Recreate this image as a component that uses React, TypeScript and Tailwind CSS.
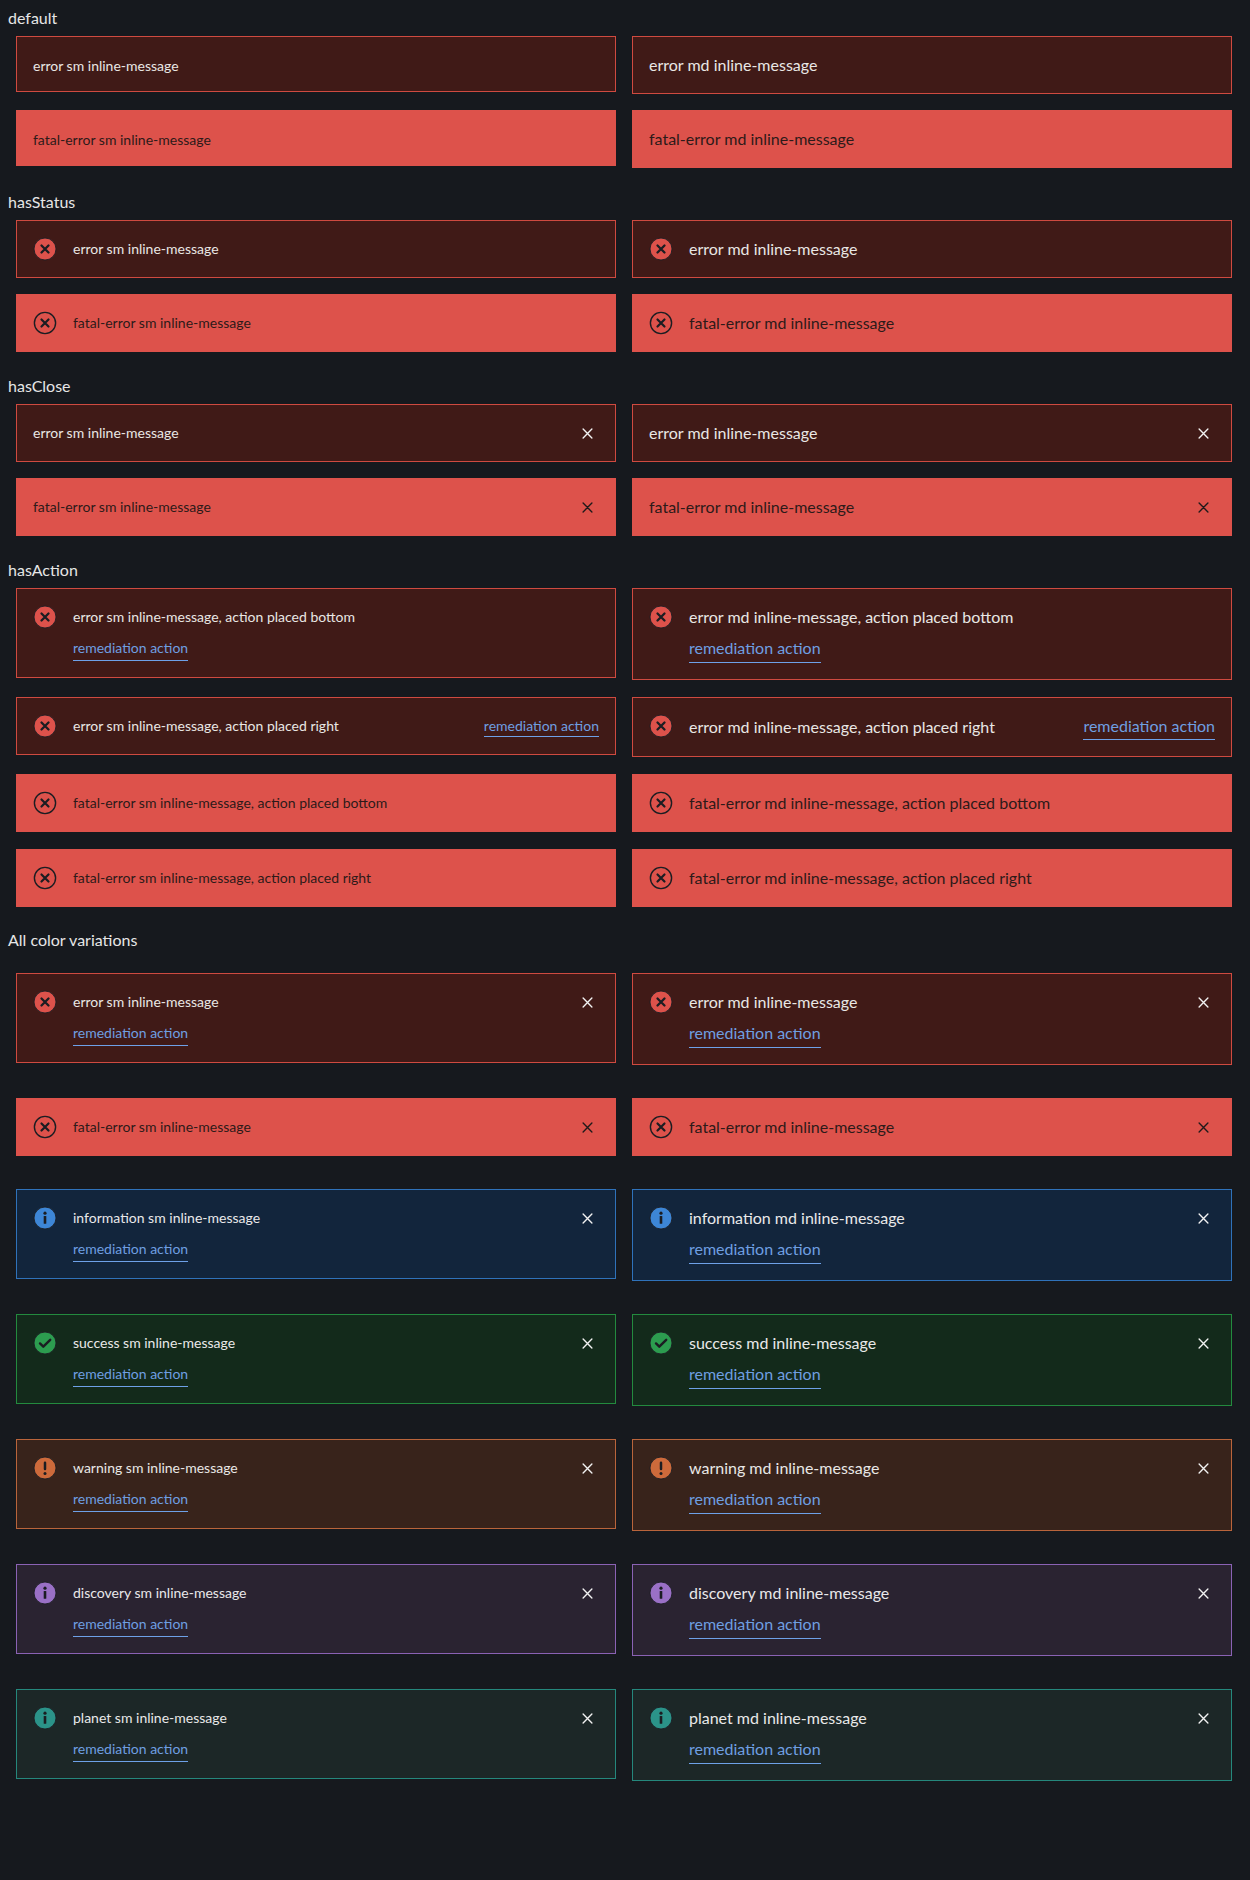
import React from "react";

type Variant = "error" | "fatal" | "information" | "success" | "warning" | "discovery" | "planet";
type Size = "sm" | "md";
type Action = "none" | "bottom" | "right";

const DARK = "#1b1d22";

const styles: Record<Variant, { box: string; text: string; icon: string; closeColor: string }> = {
  error: { box: "bg-[#401a17] border-[#cf4a40]", text: "text-[#e9e7e4]", icon: "#dd524b", closeColor: "#f2f2f2" },
  fatal: { box: "bg-[#dd524b] border-[#dd524b]", text: "text-[#2d1a19]", icon: "#dd524b", closeColor: "#1f1a1a" },
  information: { box: "bg-[#12253c] border-[#2f72ba]", text: "text-[#e9e9ea]", icon: "#3d86d6", closeColor: "#f2f2f2" },
  success: { box: "bg-[#132a1b] border-[#238a3e]", text: "text-[#e9e9e9]", icon: "#2c9c4f", closeColor: "#f2f2f2" },
  warning: { box: "bg-[#38231b] border-[#b9643b]", text: "text-[#e9e8e6]", icon: "#cd6a3b", closeColor: "#f2f2f2" },
  discovery: { box: "bg-[#2a2331] border-[#8a62b4]", text: "text-[#e9e8ea]", icon: "#9a70c6", closeColor: "#f2f2f2" },
  planet: { box: "bg-[#1c2727] border-[#25877c]", text: "text-[#e9e9e9]", icon: "#2b9389", closeColor: "#f2f2f2" },
};

function StatusIcon({ variant }: { variant: Variant }) {
  const c = styles[variant].icon;
  if (variant === "fatal") {
    return (
      <svg width="24" height="24" viewBox="0 0 24 24" className="shrink-0">
        <circle cx="12" cy="12" r="10.6" fill="none" stroke={DARK} strokeWidth="1.4" />
        <path d="M8.5 8.5l7 7M15.5 8.5l-7 7" stroke={DARK} strokeWidth="2.2" strokeLinecap="round" />
      </svg>
    );
  }
  return (
    <svg width="24" height="24" viewBox="0 0 24 24" className="shrink-0">
      <circle cx="12" cy="12" r="11" fill={c} stroke={DARK} strokeWidth="0.9" />
      {variant === "error" && (
        <path d="M8.5 8.5l7 7M15.5 8.5l-7 7" stroke={DARK} strokeWidth="2.3" strokeLinecap="round" />
      )}
      {variant === "success" && (
        <path d="M7 12.4l3.3 3.3L17.2 8.8" fill="none" stroke={DARK} strokeWidth="2.4" strokeLinecap="round" strokeLinejoin="round" />
      )}
      {variant === "warning" && (
        <>
          <rect x="10.75" y="5.6" width="2.5" height="8.6" rx="1.25" fill={DARK} />
          <circle cx="12" cy="17.4" r="1.5" fill={DARK} />
        </>
      )}
      {(variant === "information" || variant === "discovery" || variant === "planet") && (
        <>
          <circle cx="12" cy="7.2" r="1.6" fill={DARK} />
          <rect x="10.7" y="10" width="2.6" height="7.8" rx="0.6" fill={DARK} />
        </>
      )}
    </svg>
  );
}

function CloseIcon({ color }: { color: string }) {
  return (
    <div className="w-6 h-6 shrink-0 flex items-center justify-center">
      <svg width="11" height="11" viewBox="0 0 12 12">
        <path d="M1.2 1.2l9.6 9.6M10.8 1.2l-9.6 9.6" stroke={color} strokeWidth="1.5" strokeLinecap="round" />
      </svg>
    </div>
  );
}

function Link({ size }: { size: Size }) {
  return size === "sm" ? (
    <span className="inline-block text-[14px] leading-[21px] pb-[2px] text-[#6f9fe1] border-b border-[#6ea1e8]">remediation action</span>
  ) : (
    <span className="inline-block text-[16px] leading-6 pb-[2px] text-[#6f9fe1] border-b border-[#6ea1e8]">remediation action</span>
  );
}

function RightLink({ size }: { size: Size }) {
  return size === "sm" ? (
    <span className="inline-block text-[14px] leading-[21px] text-[#6f9fe1] border-b border-[#6ea1e8]">remediation action</span>
  ) : (
    <span className="inline-block text-[16px] leading-6 pb-px text-[#6f9fe1] border-b border-[#6ea1e8]">remediation action</span>
  );
}

function Message({
  variant,
  size,
  text,
  status = false,
  close = false,
  action = "none",
}: {
  variant: Variant;
  size: Size;
  text: string;
  status?: boolean;
  close?: boolean;
  action?: Action;
}) {
  const s = styles[variant];
  const showAction = action !== "none" && variant !== "fatal";
  const plain = !status && !close;
  const textCls =
    size === "sm"
      ? plain
        ? "text-[14px] leading-[18px] pt-[4px]"
        : "text-[14px] leading-[22px]"
      : "text-[16px] leading-6";
  const rowMin = status || close ? "min-h-6" : "";
  return (
    <div className={`flex items-start gap-4 p-4 border ${s.box} ${s.text}`}>
      {status && <StatusIcon variant={variant} />}
      <div className="flex-1 min-w-0">
        {showAction && action === "right" ? (
          <div className={`flex items-center justify-between ${rowMin}`}>
            <span className={textCls}>{text}</span>
            <RightLink size={size} />
          </div>
        ) : (
          <>
            <div className={`flex items-center ${rowMin}`}>
              <span className={textCls}>{text}</span>
            </div>
            {showAction && action === "bottom" && (
              <div className={size === "sm" ? "mt-[6px]" : "mt-[7px]"}>
                <Link size={size} />
              </div>
            )}
          </>
        )}
      </div>
      {close && <CloseIcon color={s.closeColor} />}
    </div>
  );
}

function Section({
  title,
  children,
  kind = "base",
}: {
  title: string;
  children: React.ReactNode;
  kind?: "base" | "action" | "colors";
}) {
  const gridCls =
    kind === "colors"
      ? "mt-[21px] gap-y-[33px]"
      : kind === "action"
      ? "mt-[6px] gap-y-[17px]"
      : "mt-[6px] gap-y-4";
  return (
    <section className={kind === "colors" ? "" : kind === "action" ? "mb-[21px]" : "mb-[22px]"}>
      <h2 className="text-[16px] leading-6 text-[#e6e6e6] font-normal">{title}</h2>
      <div className={`ml-2 w-[1216px] grid grid-cols-2 gap-x-4 items-start ${gridCls}`}>{children}</div>
    </section>
  );
}

export default function App() {
  const colorVariants: { v: Variant; label: string }[] = [
    { v: "error", label: "error" },
    { v: "fatal", label: "fatal-error" },
    { v: "information", label: "information" },
    { v: "success", label: "success" },
    { v: "warning", label: "warning" },
    { v: "discovery", label: "discovery" },
    { v: "planet", label: "planet" },
  ];
  return (
    <div
      className="min-h-[1880px] bg-[#16191e] px-2 pt-[6px]"
      style={{ fontFamily: "Lato, 'Noto Sans', 'Liberation Sans', sans-serif" }}
    >
      <Section title="default">
        <Message variant="error" size="sm" text="error sm inline-message" />
        <Message variant="error" size="md" text="error md inline-message" />
        <Message variant="fatal" size="sm" text="fatal-error sm inline-message" />
        <Message variant="fatal" size="md" text="fatal-error md inline-message" />
      </Section>
      <Section title="hasStatus">
        <Message variant="error" size="sm" status text="error sm inline-message" />
        <Message variant="error" size="md" status text="error md inline-message" />
        <Message variant="fatal" size="sm" status text="fatal-error sm inline-message" />
        <Message variant="fatal" size="md" status text="fatal-error md inline-message" />
      </Section>
      <Section title="hasClose">
        <Message variant="error" size="sm" close text="error sm inline-message" />
        <Message variant="error" size="md" close text="error md inline-message" />
        <Message variant="fatal" size="sm" close text="fatal-error sm inline-message" />
        <Message variant="fatal" size="md" close text="fatal-error md inline-message" />
      </Section>
      <Section title="hasAction" kind="action">
        <Message variant="error" size="sm" status action="bottom" text="error sm inline-message, action placed bottom" />
        <Message variant="error" size="md" status action="bottom" text="error md inline-message, action placed bottom" />
        <Message variant="error" size="sm" status action="right" text="error sm inline-message, action placed right" />
        <Message variant="error" size="md" status action="right" text="error md inline-message, action placed right" />
        <Message variant="fatal" size="sm" status action="bottom" text="fatal-error sm inline-message, action placed bottom" />
        <Message variant="fatal" size="md" status action="bottom" text="fatal-error md inline-message, action placed bottom" />
        <Message variant="fatal" size="sm" status action="right" text="fatal-error sm inline-message, action placed right" />
        <Message variant="fatal" size="md" status action="right" text="fatal-error md inline-message, action placed right" />
      </Section>
      <Section title="All color variations" kind="colors">
        {colorVariants.map(({ v, label }) => (
          <React.Fragment key={v}>
            <Message variant={v} size="sm" status close action="bottom" text={`${label} sm inline-message`} />
            <Message variant={v} size="md" status close action="bottom" text={`${label} md inline-message`} />
          </React.Fragment>
        ))}
      </Section>
    </div>
  );
}
